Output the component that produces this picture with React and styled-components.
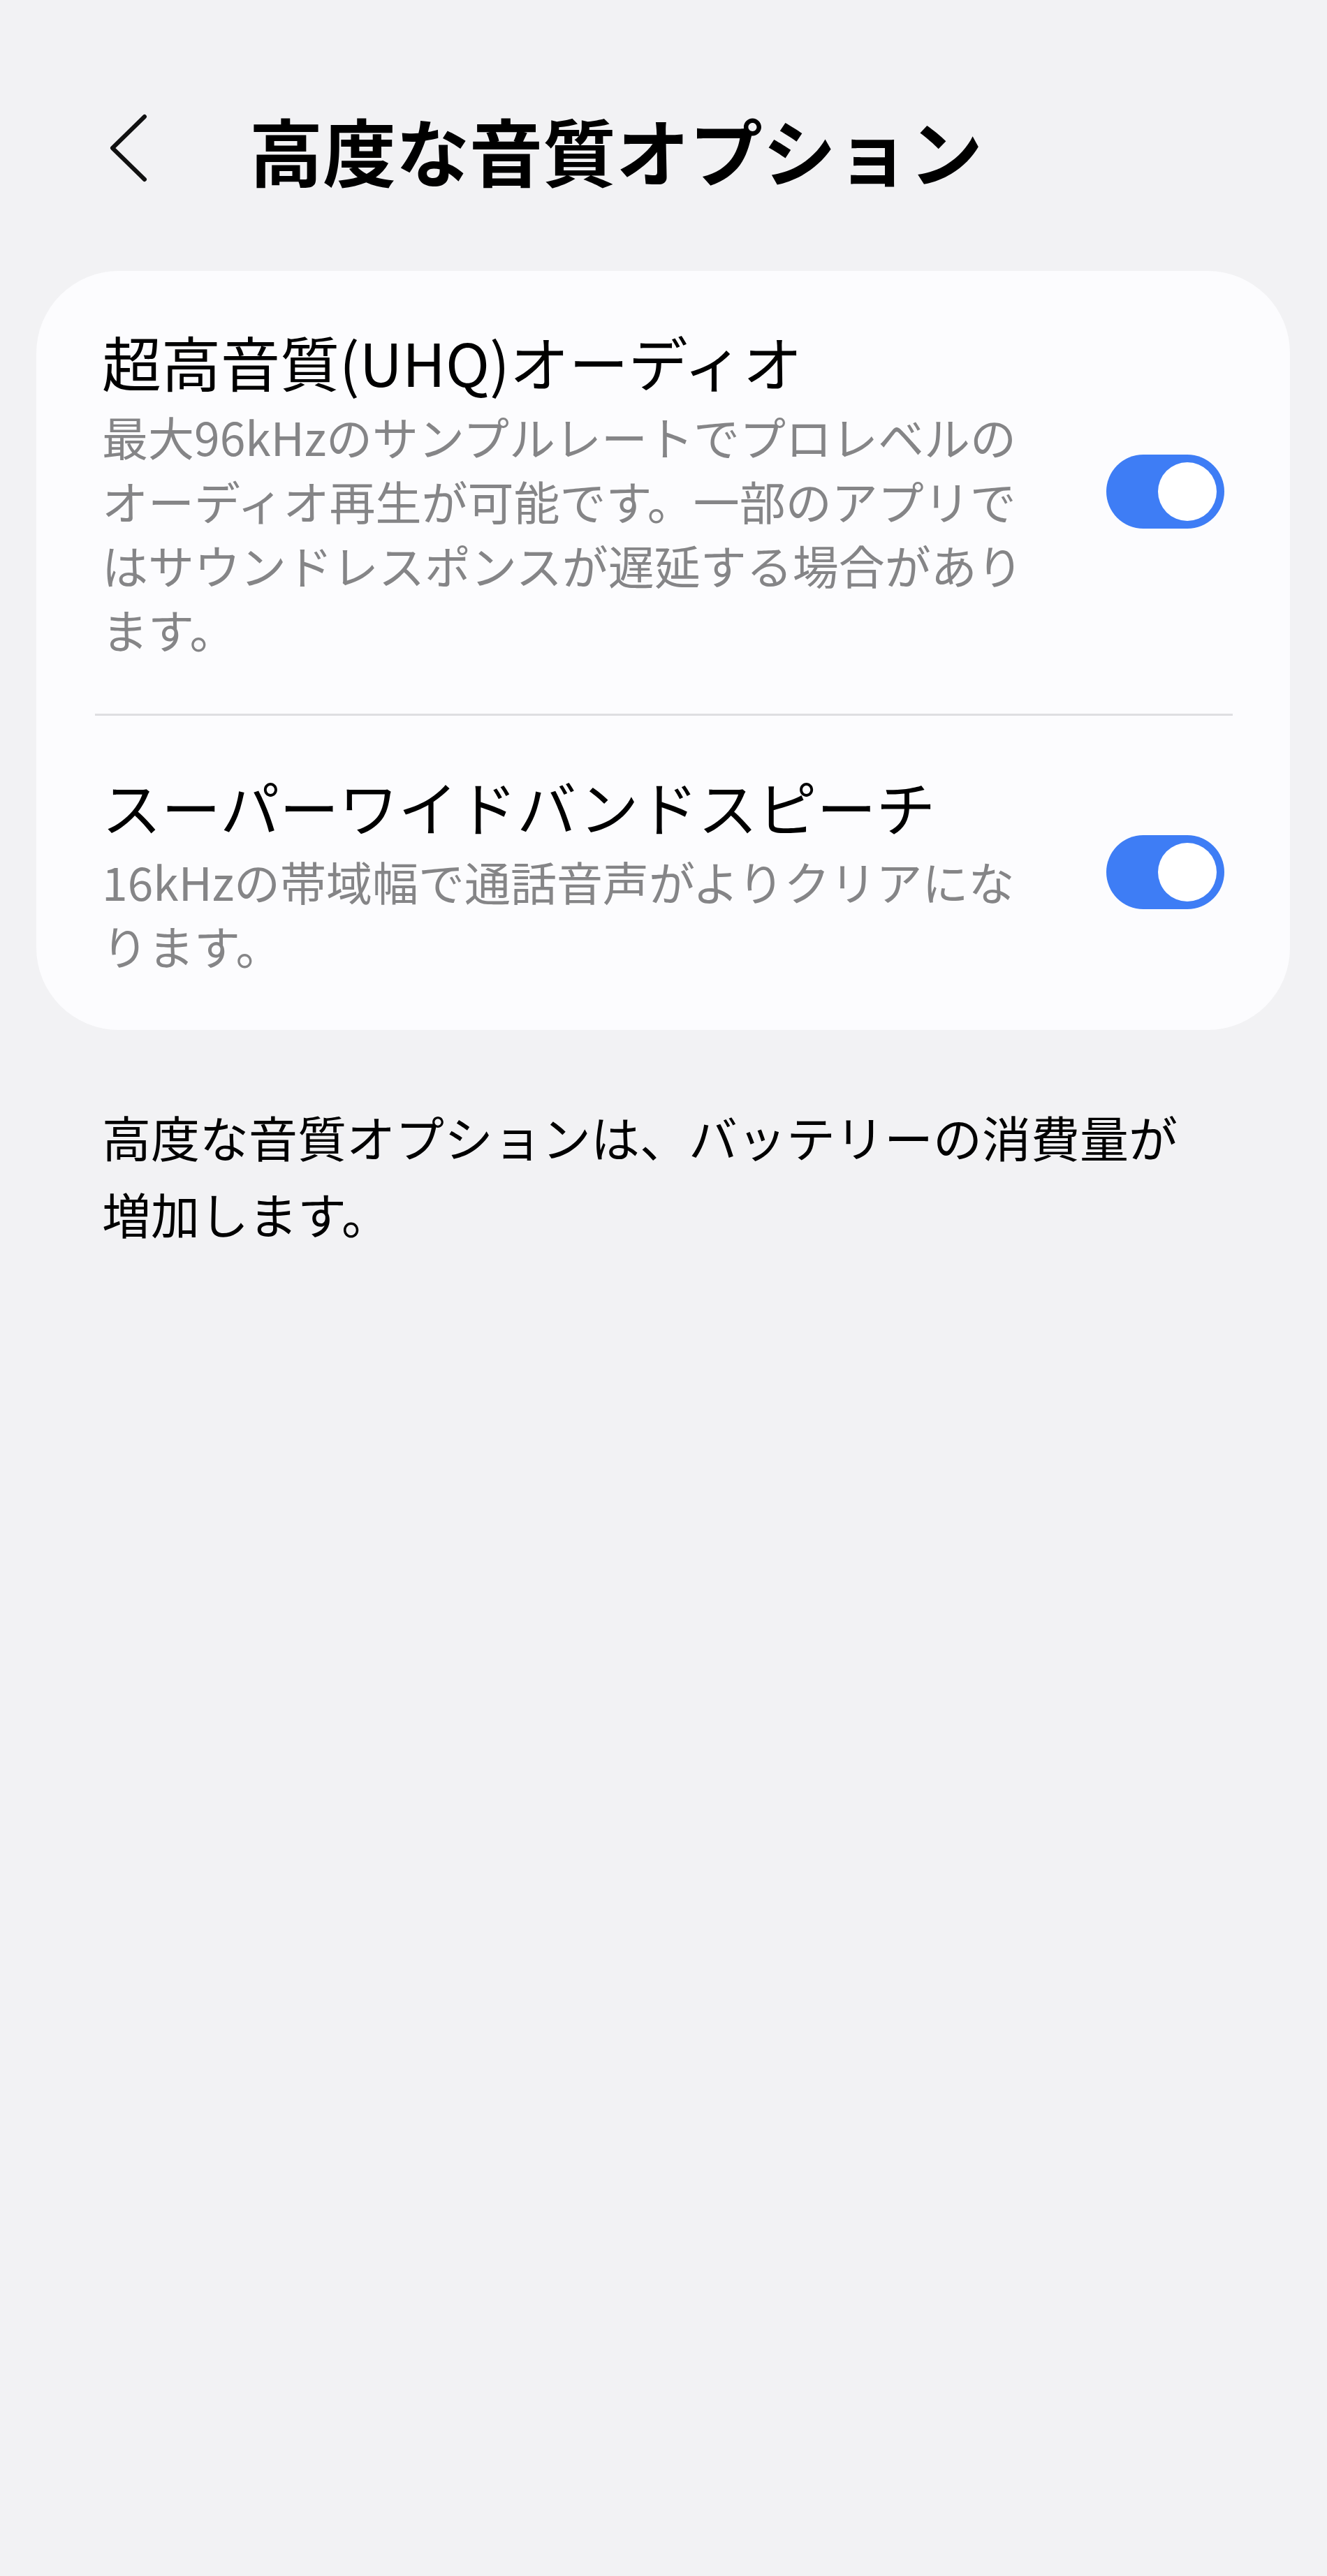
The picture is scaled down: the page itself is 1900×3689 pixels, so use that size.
import React, { useState } from "react";
import styled, { createGlobalStyle } from "styled-components";

//--------------------------------------------------------------------------------------------------------------------------------//

const options = [
  {
    id: "uhq",
    title: "超高音質(UHQ)オーディオ",
    lines: [
      "最大96kHzのサンプルレートでプロレベルの",
      "オーディオ再生が可能です。一部のアプリで",
      "はサウンドレスポンスが遅延する場合があり",
      "ます。",
    ],
  },
  {
    id: "swb",
    title: "スーパーワイドバンドスピーチ",
    lines: ["16kHzの帯域幅で通話音声がよりクリアにな", "ります。"],
  },
];

//--------------------------------------------------------------------------------------------------------------------------------//

const App = () => {
  const [enabled, setEnabled] = useState({ uhq: true, swb: true });

  const toggle = (id) => setEnabled((prev) => ({ ...prev, [id]: !prev[id] }));

  return (
    <Page>
      <GlobalStyle />
      <Header>
        <BackButton aria-label="戻る">
          <svg width="64" height="100" viewBox="0 0 64 100">
            <polyline
              points="52,4 6,49 52,94"
              fill="none"
              stroke="#111"
              strokeWidth="6"
              strokeLinecap="round"
              strokeLinejoin="round"
            />
          </svg>
        </BackButton>
        <Title>高度な音質オプション</Title>
      </Header>

      <Card>
        {options.map((opt, i) => (
          <React.Fragment key={opt.id}>
            {i > 0 && <Divider />}
            <Row onClick={() => toggle(opt.id)}>
              <RowText>
                <RowTitle>{opt.title}</RowTitle>
                <RowDesc>
                  {opt.lines.map((line) => (
                    <span key={line}>{line}</span>
                  ))}
                </RowDesc>
              </RowText>
              <Switch $on={enabled[opt.id]}>
                <Knob $on={enabled[opt.id]} />
              </Switch>
            </Row>
          </React.Fragment>
        ))}
      </Card>

      <Footnote>
        <span>高度な音質オプションは、バッテリーの消費量が</span>
        <span>増加します。</span>
      </Footnote>
    </Page>
  );
};

export default App;

//--------------------------------------------------------------------------------------------------------------------------------//

const GlobalStyle = createGlobalStyle`
  html, body {
    margin: 0;
    padding: 0;
    background: #f2f2f4;
  }
  body {
    font-family: "Noto Sans CJK JP", "Noto Sans", sans-serif;
    color: #000;
  }
`;

const Page = styled.div`
  min-height: 3689px;
  background: #f2f2f4;
  padding-top: 148px;
  box-sizing: border-box;
`;

const Header = styled.div`
  display: flex;
  align-items: center;
  height: 130px;
  padding-left: 155px;
`;

const BackButton = styled.div`
  display: flex;
  align-items: center;
  width: 64px;
  height: 100px;
  margin-right: 138px;
`;

const Title = styled.h1`
  margin: 0;
  font-size: 105px;
  line-height: 130px;
  font-weight: 700;
  letter-spacing: 0;
  white-space: nowrap;
`;

const Card = styled.div`
  margin: 110px 53px 0 52px;
  background: #fcfcfe;
  border-radius: 118px;
  display: flex;
  flex-direction: column;
`;

const Row = styled.div`
  display: flex;
  align-items: center;
  justify-content: space-between;
  padding: 74px 94px 76px 94px;
  cursor: pointer;
`;

const RowText = styled.div`
  display: flex;
  flex-direction: column;
`;

const RowTitle = styled.div`
  font-size: 85px;
  line-height: 110px;
  color: #000;
  white-space: nowrap;
`;

const RowDesc = styled.div`
  display: flex;
  flex-direction: column;
  margin-top: 6px;
  font-size: 66px;
  line-height: 92px;
  color: #858587;
  white-space: nowrap;
`;

const Divider = styled.div`
  height: 3px;
  margin: 0 82px 0 84px;
  background: #dedee1;
`;

const Switch = styled.div`
  flex-shrink: 0;
  width: 169px;
  height: 106px;
  border-radius: 53px;
  background: ${(p) => (p.$on ? "#3e7df5" : "#b9b9bd")};
  display: flex;
  align-items: center;
  justify-content: ${(p) => (p.$on ? "flex-end" : "flex-start")};
  padding: 0 11px;
  box-sizing: border-box;
`;

const Knob = styled.div`
  width: 84px;
  height: 84px;
  border-radius: 50%;
  background: #fff;
`;

const Footnote = styled.p`
  display: flex;
  flex-direction: column;
  margin: 98px 0 0 0;
  padding-left: 146px;
  font-size: 70px;
  line-height: 110px;
  color: #000;
  white-space: nowrap;
`;
